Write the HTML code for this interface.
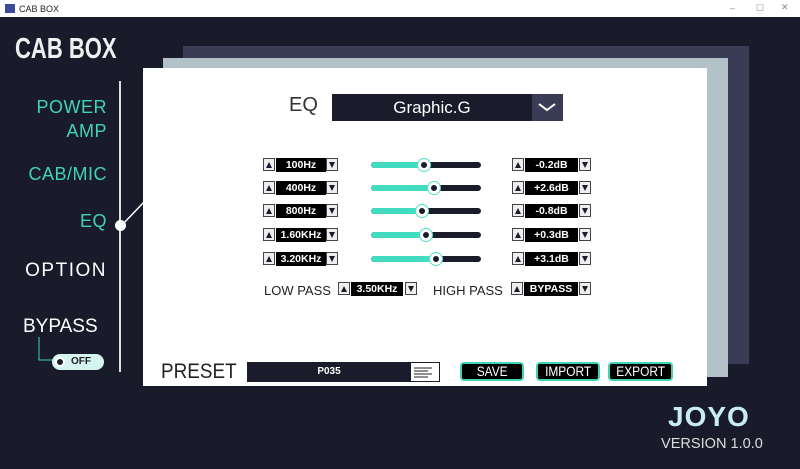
<!DOCTYPE html>
<html><head><meta charset="utf-8"><style>
*{margin:0;padding:0;box-sizing:border-box}
body{width:800px;height:469px;overflow:hidden;background:#191b2b;font-family:"Liberation Sans",sans-serif;position:relative}
.a{position:absolute}
.tb{left:0;top:0;width:800px;height:17px;background:#fff;font-size:9px;color:#222}
.nav{color:#3fd4b4;font-size:18px;text-align:right;width:107px;left:0;letter-spacing:.5px}
.btn{width:12px;height:13px;border:1px solid #444;background:#eee}
.up:after,.dn:after{content:"";position:absolute;left:2px;border-left:3.5px solid transparent;border-right:3.5px solid transparent}
.up:after{top:3px;border-bottom:6px solid #1a1c2c}
.dn:after{top:3px;border-top:6px solid #1a1c2c}
.box{background:#000;color:#fff;font-size:10.5px;font-weight:bold;text-align:center;height:14px;line-height:14px}
.trk{height:6px;border-radius:3px;background:#1a1c2c}
.fill{height:6px;border-radius:3px;background:#44dcc0}
.knob{width:14px;height:14px;border-radius:50%;background:#fff;border:1px solid #55e0c8}
.knob:after{content:"";position:absolute;left:3px;top:3px;width:6px;height:6px;border-radius:50%;background:#1a1c2c}
.pb{height:19px;border:2px solid #3fd4b4;border-radius:4px;background:#000;color:#fff;font-size:14px;text-align:center;line-height:15px}
.pb span{display:inline-block;transform:scaleX(.85)}
</style></head><body>
<div class="a tb"><div class="a" style="left:5px;top:4px;width:10px;height:9px;background:#3a4a9a"></div><div class="a" style="left:19px;top:4px">CAB BOX</div>
<div class="a" style="left:730px;top:3px;color:#888">–</div><div class="a" style="left:756px;top:3px;color:#888">☐</div><div class="a" style="left:781px;top:2px;color:#888">✕</div></div>
<div class="a" style="left:15px;top:33px;color:#f0f0f0;font-size:29px;font-weight:bold;transform:scaleX(.76);transform-origin:left">CAB BOX</div>
<div class="a" style="left:183px;top:46px;width:566px;height:318px;background:#3a3c55"></div>
<div class="a" style="left:163px;top:58px;width:565px;height:319px;background:#b3c1c8"></div>
<div class="a" style="left:143px;top:68px;width:564px;height:318px;background:#fff"></div>
<div class="a" style="left:119px;top:81px;width:2px;height:291px;background:#ddd"></div>
<div class="a nav" style="top:95px;line-height:24px">POWER<br>AMP</div>
<div class="a nav" style="top:164px">CAB/MIC</div>
<div class="a nav" style="top:211px">EQ</div>
<div class="a" style="left:115px;top:220px;width:11px;height:11px;border-radius:50%;background:#fff"></div>
<svg class="a" style="left:120px;top:200px" width="25" height="27"><line x1="2" y1="25" x2="24" y2="2" stroke="#fff" stroke-width="1.5"/></svg>
<div class="a nav" style="top:260px;color:#fff;font-size:19px;letter-spacing:1.5px">OPTION</div>
<div class="a" style="left:23px;top:316px;color:#fff;font-size:19px">BYPASS</div>
<svg class="a" style="left:38px;top:337px" width="20" height="30"><path d="M1 0V23H16" stroke="#3fd4b4" fill="none"/></svg>
<div class="a" style="left:52px;top:354px;width:52px;height:16px;border-radius:8px;background:#d6f4ee;font-size:10px;font-weight:bold;color:#1a1c2c;padding:2px 0 0 19px">OFF</div>
<div class="a" style="left:55px;top:357px;width:10px;height:10px;border-radius:50%;background:#1a1c2c;border:2px solid #fff"></div>
<div class="a" style="left:289px;top:94px;font-size:20px;color:#333">EQ</div>
<div class="a" style="left:332px;top:94px;width:200px;height:27px;background:#1a1c2c;color:#fff;font-size:17px;text-align:center;line-height:27px">Graphic.G</div>
<div class="a" style="left:532px;top:94px;width:31px;height:27px;background:#3a3c55"><svg width="31" height="27"><path d="M7 10l8 6 8-6" stroke="#fff" stroke-width="2" fill="none"/></svg></div>
<div id="rows"></div>
<div class="a" style="left:264px;top:283px;font-size:13px;color:#222">LOW PASS</div>
<div class="a btn up" style="left:338px;top:282px"></div><div class="a box" style="left:351px;top:282px;width:52px">3.50KHz</div><div class="a btn dn" style="left:405px;top:282px"></div>
<div class="a" style="left:433px;top:283px;font-size:13px;color:#222">HIGH PASS</div>
<div class="a btn up" style="left:511px;top:282px"></div><div class="a box" style="left:524px;top:282px;width:54px">BYPASS</div><div class="a btn dn" style="left:579px;top:282px"></div>
<div class="a" style="left:161px;top:360px;font-size:21px;color:#222;transform:scaleX(.9);transform-origin:left">PRESET</div>
<div class="a" style="left:247px;top:362px;width:164px;height:20px;background:#1a1c2c;color:#fff;font-size:10px;font-weight:bold;text-align:center;line-height:20px">P035</div>
<div class="a" style="left:410px;top:362px;width:30px;height:20px;background:#fff;border:1px solid #1a1c2c"><svg width="28" height="18"><path d="M3 5h18M3 8h14M3 11h18M3 14h14" stroke="#222"/></svg></div>
<div class="a pb" style="left:460px;top:362px;width:64px"><span>SAVE</span></div>
<div class="a pb" style="left:536px;top:362px;width:64px"><span>IMPORT</span></div>
<div class="a pb" style="left:608px;top:362px;width:65px"><span>EXPORT</span></div>
<div class="a" style="left:668px;top:401px;color:#c8ecf0;font-size:28px;font-weight:bold;letter-spacing:1px">JOYO</div>
<div class="a" style="left:661px;top:435px;color:#ddd;font-size:15px;transform:scaleX(.97);transform-origin:left">VERSION 1.0.0</div>
<script>
var f=["100Hz","400Hz","800Hz","1.60KHz","3.20KHz"],d=["-0.2dB","+2.6dB","-0.8dB","+0.3dB","+3.1dB"],k=[424,434,422,426,436],h="";
for(var i=0;i<5;i++){var y=[158,181,204,228,252][i];
h+='<div class="a btn up" style="left:263px;top:'+y+'px"></div><div class="a box" style="left:276px;top:'+y+'px;width:50px">'+f[i]+'</div><div class="a btn dn" style="left:326px;top:'+y+'px"></div>';
h+='<div class="a trk" style="left:371px;top:'+(y+4)+'px;width:110px"></div><div class="a fill" style="left:371px;top:'+(y+4)+'px;width:'+(k[i]-371)+'px"></div><div class="a knob" style="left:'+(k[i]-7)+'px;top:'+y+'px"></div>';
h+='<div class="a btn up" style="left:512px;top:'+y+'px"></div><div class="a box" style="left:525px;top:'+y+'px;width:53px">'+d[i]+'</div><div class="a btn dn" style="left:579px;top:'+y+'px"></div>';}
document.getElementById("rows").innerHTML=h;
</script>
</body></html>
